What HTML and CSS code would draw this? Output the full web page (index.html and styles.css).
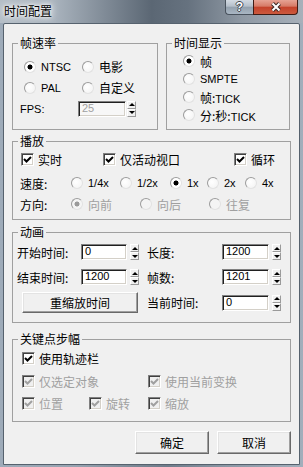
FILE: index.html
```html
<!DOCTYPE html>
<html lang="zh-CN">
<head>
    <meta charset="UTF-8">
    <meta name="viewport" content="width=device-width, initial-scale=1.0">
    <title>时间配置</title>
    <link rel="stylesheet" href="styles.css">
</head>
<body>
    <div class="window">
        <div class="titlebar">
            <span class="title">时间配置</span>
            <div class="caption-btns">
                <span class="cap-btn help">?</span>
                <span class="cap-btn close">
                    <svg width="12" height="10" viewBox="0 0 12 10">
                        <path d="M2.5 1.5 L9.5 8.5 M9.5 1.5 L2.5 8.5" stroke="#3b2a26" stroke-width="4" fill="none"/>
                        <path d="M2.5 1.5 L9.5 8.5 M9.5 1.5 L2.5 8.5" stroke="#fff" stroke-width="2" fill="none"/>
                    </svg>
                </span>
            </div>
        </div>

        <div class="client">
            <div class="top-row">
                <fieldset class="group rate-group">
                    <legend>帧速率</legend>
                    <div class="row rate-row">
                        <span class="opt w58"><span class="radio on"></span><span class="lat">NTSC</span></span>
                        <span class="opt"><span class="radio"></span>电影</span>
                    </div>
                    <div class="row rate-row">
                        <span class="opt w58"><span class="radio"></span><span class="lat">PAL</span></span>
                        <span class="opt"><span class="radio"></span>自定义</span>
                    </div>
                    <div class="row fps-row">
                        <span class="lat fps-label">FPS:</span>
                        <span class="edit dis fps-edit">25</span>
                        <span class="spin fps-spin"><span class="half"><i class="up"></i></span><span class="half"><i class="down"></i></span></span>
                    </div>
                </fieldset>

                <fieldset class="group display-group">
                    <legend>时间显示</legend>
                    <div class="row disp-row"><span class="opt"><span class="radio on"></span>帧</span></div>
                    <div class="row disp-row"><span class="opt"><span class="radio"></span><span class="lat">SMPTE</span></span></div>
                    <div class="row disp-row"><span class="opt"><span class="radio"></span><span>帧:<span class="lat">TICK</span></span></span></div>
                    <div class="row disp-row"><span class="opt"><span class="radio"></span><span>分:秒:<span class="lat">TICK</span></span></span></div>
                </fieldset>
            </div>

            <fieldset class="group play-group">
                <legend>播放</legend>
                <div class="row play-checks">
                    <span class="chk w82"><span class="cb"><svg class="tick" width="9" height="9" viewBox="0 0 9 9"><path d="M1 4 L3.5 6.5 L8 2"/></svg></span>实时</span>
                    <span class="chk w131"><span class="cb"><svg class="tick" width="9" height="9" viewBox="0 0 9 9"><path d="M1 4 L3.5 6.5 L8 2"/></svg></span>仅活动视口</span>
                    <span class="chk"><span class="cb"><svg class="tick" width="9" height="9" viewBox="0 0 9 9"><path d="M1 4 L3.5 6.5 L8 2"/></svg></span>循环</span>
                </div>
                <div class="row speed-row">
                    <span class="row-label">速度:</span>
                    <span class="opt w49"><span class="radio"></span><span class="lat">1/4x</span></span>
                    <span class="opt w50"><span class="radio"></span><span class="lat">1/2x</span></span>
                    <span class="opt w37"><span class="radio on"></span><span class="lat">1x</span></span>
                    <span class="opt w38"><span class="radio"></span><span class="lat">2x</span></span>
                    <span class="opt"><span class="radio"></span><span class="lat">4x</span></span>
                </div>
                <div class="row dir-row">
                    <span class="row-label">方向:</span>
                    <span class="opt w69 dis"><span class="radio on"></span>向前</span>
                    <span class="opt w69 dis"><span class="radio"></span>向后</span>
                    <span class="opt dis"><span class="radio"></span>往复</span>
                </div>
            </fieldset>

            <fieldset class="group anim-group">
                <legend>动画</legend>
                <div class="row anim-row">
                    <span class="field-label">开始时间:</span>
                    <span class="edit">0</span>
                    <span class="spin"><span class="half"><i class="up"></i></span><span class="half"><i class="down"></i></span></span>
                    <span class="field-label second">长度:</span>
                    <span class="edit wide">1200</span>
                    <span class="spin"><span class="half"><i class="up"></i></span><span class="half"><i class="down"></i></span></span>
                </div>
                <div class="row anim-row gap5">
                    <span class="field-label">结束时间:</span>
                    <span class="edit">1200</span>
                    <span class="spin"><span class="half"><i class="up"></i></span><span class="half"><i class="down"></i></span></span>
                    <span class="field-label second">帧数:</span>
                    <span class="edit wide">1201</span>
                    <span class="spin"><span class="half"><i class="up"></i></span><span class="half"><i class="down"></i></span></span>
                </div>
                <div class="row anim-row last">
                    <span class="btn rescale-btn">重缩放时间</span>
                    <span class="field-label current">当前时间:</span>
                    <span class="edit wide">0</span>
                    <span class="spin"><span class="half"><i class="up"></i></span><span class="half"><i class="down"></i></span></span>
                </div>
            </fieldset>

            <fieldset class="group key-group">
                <legend>关键点步幅</legend>
                <div class="row key-row">
                    <span class="chk"><span class="cb"><svg class="tick" width="9" height="9" viewBox="0 0 9 9"><path d="M1 4 L3.5 6.5 L8 2"/></svg></span>使用轨迹栏</span>
                </div>
                <div class="row key-row second-row">
                    <span class="chk w126 dis"><span class="cb"><svg class="tick" width="9" height="9" viewBox="0 0 9 9"><path d="M1 4 L3.5 6.5 L8 2"/></svg></span>仅选定对象</span>
                    <span class="chk dis"><span class="cb"><svg class="tick" width="9" height="9" viewBox="0 0 9 9"><path d="M1 4 L3.5 6.5 L8 2"/></svg></span>使用当前变换</span>
                </div>
                <div class="row key-row third-row">
                    <span class="chk w67 dis"><span class="cb"><svg class="tick" width="9" height="9" viewBox="0 0 9 9"><path d="M1 4 L3.5 6.5 L8 2"/></svg></span>位置</span>
                    <span class="chk w59 dis"><span class="cb"><svg class="tick" width="9" height="9" viewBox="0 0 9 9"><path d="M1 4 L3.5 6.5 L8 2"/></svg></span>旋转</span>
                    <span class="chk dis"><span class="cb"><svg class="tick" width="9" height="9" viewBox="0 0 9 9"><path d="M1 4 L3.5 6.5 L8 2"/></svg></span>缩放</span>
                </div>
            </fieldset>

            <div class="actions">
                <span class="btn action-btn">确定</span>
                <span class="btn action-btn">取消</span>
            </div>
        </div>
    </div>
</body>
</html>
```

FILE: styles.css
```css
body {
    margin: 0;
    background-color: #ffffff;
    font-family: "Noto Sans CJK SC", "Liberation Sans", sans-serif;
    font-size: 12px;
    color: #000;
}

.window {
    width: 303px;
    height: 467px;
    box-sizing: border-box;
    display: flex;
    flex-direction: column;
    padding: 0 3px 2px;
    background: linear-gradient(90deg, #9eabb9 0%, #97a3b0 25%, #7a8794 45%, #6f7c8a 55%, #8c98a5 75%, #a2aebb 100%);
}

/* title bar */
.titlebar {
    height: 23px;
    display: flex;
    align-items: flex-start;
    margin: 0 -3px;
    padding: 0 3px;
    background: linear-gradient(90deg, #b5bec7 0%, #a9b3bd 18%, #7f8a96 35%, #5b6774 50%, #66727f 62%, #8f99a4 80%, #a7b0ba 100%);
}

.title {
    padding: 4px 0 0 1px;
    line-height: 14px;
    font-size: 12px;
    text-shadow: 0 0 6px #fff, 0 0 10px #fff, 0 0 3px #fff;
}

.caption-btns {
    margin-left: auto;
    margin-right: 2px;
    display: flex;
}

.cap-btn {
    height: 15px;
    box-sizing: border-box;
    display: flex;
    align-items: center;
    justify-content: center;
    border: 1px solid #49525d;
    border-top: none;
}

.help {
    width: 28px;
    border-right: none;
    border-radius: 0 0 0 4px;
    background: linear-gradient(#d3dae2, #b5bfca 45%, #93a0ad 50%, #a9b6c3 100%);
    font-family: "Liberation Sans", sans-serif;
    font-weight: bold;
    font-size: 12px;
    color: #fff;
    text-shadow: 1px 0 #3d4650, -1px 0 #3d4650, 0 1px #3d4650, 0 -1px #3d4650;
}

.close {
    width: 45px;
    border-color: #3f1c15;
    border-radius: 0 0 4px 0;
    background: linear-gradient(#e6a394, #d67a66 45%, #c4412a 50%, #cc5a3e 100%);
}

/* client area */
.client {
    flex: 1;
    background-color: #f0f0f0;
    border: 1px solid #56626e;
    border-radius: 2px 2px 0 0;
    padding: 12px 8px 0;
    display: flex;
    flex-direction: column;
}

.top-row {
    display: flex;
    gap: 8px;
}

.group {
    margin: 0;
    padding: 0;
    border: 1px solid #a0a0a0;
    box-sizing: border-box;
    min-width: 0;
}

.group legend {
    margin-left: 5px;
    padding: 0 2px;
    line-height: 14px;
    font-size: 12px;
}

.row {
    display: flex;
    align-items: center;
}

.lat {
    font-family: "Liberation Sans", sans-serif;
    font-size: 11px;
}

.opt {
    display: flex;
    align-items: center;
    gap: 5px;
    white-space: nowrap;
}

.chk {
    display: flex;
    align-items: center;
    gap: 4px;
    white-space: nowrap;
}

.dis {
    color: #a0a0a0;
}

.w37 { width: 37px; }
.w38 { width: 38px; }
.w49 { width: 49px; }
.w50 { width: 50px; }
.w58 { width: 58px; }
.w59 { width: 59px; }
.w67 { width: 67px; }
.w69 { width: 69px; }
.w82 { width: 82px; }
.w126 { width: 126px; }
.w131 { width: 131px; }

/* radio buttons */
.radio {
    flex: none;
    width: 12px;
    height: 12px;
    box-sizing: border-box;
    border-radius: 50%;
    border: 1px solid;
    border-color: #9c9c9c #e2e2e2 #e2e2e2 #9c9c9c;
    background: radial-gradient(circle at 40% 40%, #ffffff, #f1f1f1);
}

.radio.on {
    background: radial-gradient(circle, #000 0, #000 2.2px, #fff 2.8px);
}

.dis .radio {
    background: #f4f4f4;
}

.dis .radio.on {
    background: radial-gradient(circle, #9a9a9a 0, #9a9a9a 2.2px, #f4f4f4 2.8px);
}

/* check boxes */
.cb {
    flex: none;
    width: 13px;
    height: 13px;
    box-sizing: border-box;
    display: flex;
    align-items: center;
    justify-content: center;
    background-color: #fff;
    border: 1px solid;
    border-color: #808080 #fff #fff #808080;
    box-shadow: inset 1px 1px 0 #404040, inset -1px -1px 0 #d4d0c8;
}

.tick path {
    fill: none;
    stroke: #000;
    stroke-width: 2;
}

.dis .cb {
    background-color: #f0f0f0;
}

.dis .tick path {
    stroke: #a0a0a0;
}

/* edit fields and spinners */
.edit {
    width: 46px;
    height: 16px;
    box-sizing: border-box;
    padding-left: 3px;
    background-color: #fff;
    border: 1px solid;
    border-color: #808080 #fff #fff #808080;
    box-shadow: inset 1px 1px 0 #202020, inset -1px -1px 0 #d4d0c8;
    font-family: "Liberation Sans", sans-serif;
    font-size: 11px;
    line-height: 13px;
}

.edit.wide {
    width: 47px;
}

.edit.dis {
    background-color: #f7f7f7;
}

.spin {
    flex: none;
    width: 9px;
    height: 16px;
    margin-left: 3px;
    display: flex;
    flex-direction: column;
}

.spin .half {
    flex: 1;
    box-sizing: border-box;
    display: flex;
    align-items: center;
    justify-content: center;
    background-color: #f0f0f0;
    border: 1px solid;
    border-color: #fff #9a9a9a #9a9a9a #fff;
}

.up {
    width: 0;
    height: 0;
    border-left: 3px solid transparent;
    border-right: 3px solid transparent;
    border-bottom: 3px solid #000;
}

.down {
    width: 0;
    height: 0;
    border-left: 3px solid transparent;
    border-right: 3px solid transparent;
    border-top: 3px solid #000;
}

/* frame rate group */
.rate-group {
    width: 146px;
    height: 94px;
    padding-top: 6px;
}

.rate-row {
    height: 21px;
    padding-left: 11px;
}

.fps-row {
    height: 21px;
    padding-left: 7px;
}

.fps-label {
    width: 58px;
}

.fps-edit {
    width: 48px;
    color: #a0a0a0;
}

.fps-spin {
    margin-left: 1px;
}

/* time display group */
.display-group {
    width: 124px;
    height: 94px;
    padding-top: 2px;
}

.disp-row {
    height: 18px;
    padding-left: 16px;
}

/* playback group */
.play-group {
    height: 86px;
    margin-top: 4px;
}

.play-checks {
    height: 22px;
    padding-left: 8px;
}

.speed-row {
    height: 26px;
    padding-left: 7px;
}

.dir-row {
    height: 16px;
    padding-left: 7px;
}

.row-label {
    width: 51px;
}

/* animation group */
.anim-group {
    height: 98px;
    margin-top: 5px;
    padding-top: 3px;
}

.anim-row {
    height: 20px;
    padding-left: 4px;
}

.anim-row.gap5 {
    margin-top: 5px;
}

.anim-row.last {
    height: 21px;
    margin-top: 5px;
}

.field-label {
    width: 64px;
    white-space: nowrap;
}

.field-label.second {
    width: 75px;
    margin-left: 8px;
}

.field-label.current {
    width: 75px;
    margin-left: 9px;
}

/* buttons */
.btn {
    box-sizing: border-box;
    display: flex;
    align-items: center;
    justify-content: center;
    background-color: #f0f0f0;
    border: 1px solid;
    border-color: #fff #696969 #696969 #fff;
    box-shadow: inset -1px -1px 0 #a0a0a0, inset 1px 1px 0 #e3e3e3;
    font-size: 12px;
}

.rescale-btn {
    width: 116px;
    height: 21px;
    margin-left: 5px;
}

/* key steps group */
.key-group {
    height: 90px;
    margin-top: 9px;
    padding-top: 2px;
}

.key-row {
    height: 20px;
    padding-left: 9px;
}

.key-row.second-row {
    margin-top: 3px;
}

.key-row.third-row {
    margin-top: 2px;
}

.actions {
    display: flex;
    justify-content: flex-end;
    gap: 8px;
    margin-top: 9px;
}

.action-btn {
    width: 74px;
    height: 23px;
}
```
